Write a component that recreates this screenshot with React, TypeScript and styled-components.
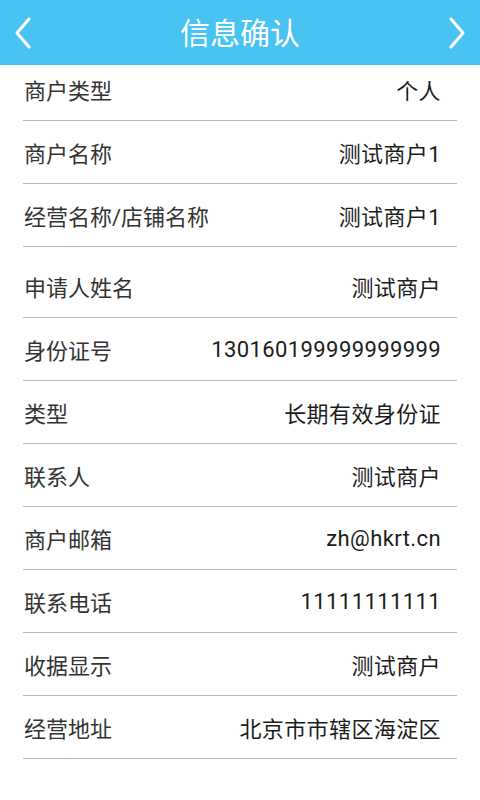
import styled, { createGlobalStyle } from "styled-components";

const GlobalStyle = createGlobalStyle`
  html, body {
    margin: 0;
    padding: 0;
    background: #ffffff;
  }
  body {
    font-family: Roboto, "Noto Sans CJK SC", sans-serif;
  }
`;

const Page = styled.div`
  width: 480px;
  min-height: 800px;
  background: #ffffff;
`;

const Header = styled.header`
  height: 65px;
  background: #48c3f2;
  display: flex;
  align-items: center;
  justify-content: space-between;
  padding: 2px 10px 0;
  box-sizing: border-box;
`;

const Title = styled.h1`
  margin: 0;
  font-size: 30px;
  font-weight: 400;
  color: #ffffff;
  line-height: 1;
`;

const NavButton = styled.button`
  width: 26px;
  height: 40px;
  padding: 0;
  margin-top: -2px;
  border: none;
  background: none;
  display: flex;
  align-items: center;
  justify-content: center;
`;

const List = styled.ul`
  list-style: none;
  margin: 0 23px;
  padding: 0;
`;

const Row = styled.li<{ $top: number }>`
  display: flex;
  align-items: center;
  justify-content: space-between;
  height: 48px;
  padding: ${(p) => p.$top}px 16px 7px 1px;
  border-bottom: 1px solid #bcbcbc;
`;

const Label = styled.span`
  font-size: 22px;
  color: #333333;
`;

const Value = styled.span`
  font-size: 22px;
  color: #1c1c1c;
  letter-spacing: 0.4px;
`;

const rows = [
  { label: "商户类型", value: "个人", top: 0 },
  { label: "商户名称", value: "测试商户1", top: 7 },
  { label: "经营名称/店铺名称", value: "测试商户1", top: 7 },
  { label: "申请人姓名", value: "测试商户", top: 15 },
  { label: "身份证号", value: "130160199999999999", top: 7 },
  { label: "类型", value: "长期有效身份证", top: 7 },
  { label: "联系人", value: "测试商户", top: 7 },
  { label: "商户邮箱", value: "zh@hkrt.cn", top: 7 },
  { label: "联系电话", value: "11111111111", top: 7 },
  { label: "收据显示", value: "测试商户", top: 7 },
  { label: "经营地址", value: "北京市市辖区海淀区", top: 7 },
];

function Chevron({ dir }: { dir: "left" | "right" }) {
  const d = dir === "left" ? "M19 4 L7 18 L19 32" : "M7 4 L19 18 L7 32";
  return (
    <svg width="26" height="36" viewBox="0 0 26 36">
      <path d={d} fill="none" stroke="#ffffff" strokeWidth="3" strokeLinecap="round" strokeLinejoin="round" />
    </svg>
  );
}

export default function App() {
  return (
    <>
      <GlobalStyle />
      <Page>
        <Header>
          <NavButton>
            <Chevron dir="left" />
          </NavButton>
          <Title>信息确认</Title>
          <NavButton>
            <Chevron dir="right" />
          </NavButton>
        </Header>
        <List>
          {rows.map((r) => (
            <Row key={r.label} $top={r.top}>
              <Label>{r.label}</Label>
              <Value>{r.value}</Value>
            </Row>
          ))}
        </List>
      </Page>
    </>
  );
}
